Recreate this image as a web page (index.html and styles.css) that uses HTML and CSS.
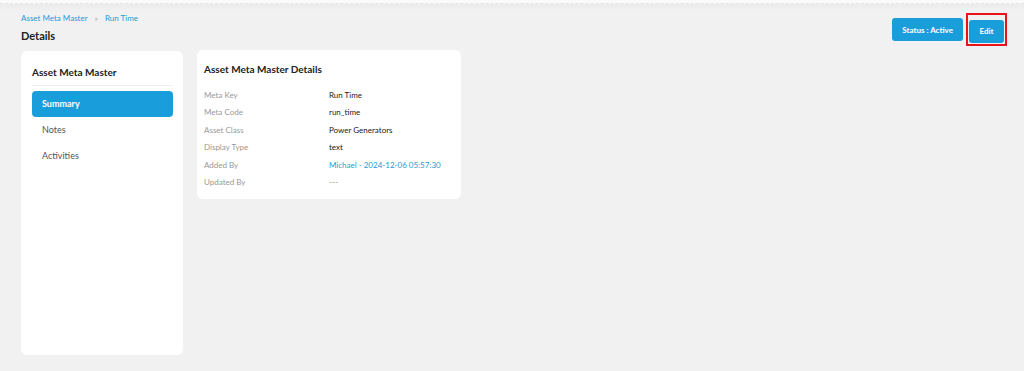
FILE: index.html
```html
<!DOCTYPE html>
<html lang="en">
<head>
    <meta charset="UTF-8">
    <meta name="viewport" content="width=device-width, initial-scale=1.0">
    <title>Asset Meta Master - Details</title>
    <link rel="stylesheet" href="styles.css">
</head>
<body>

    <div class="topbar"></div>

    <div class="page">
        <div class="page-head">
            <div>
                <div class="breadcrumb">
                    <a href="#">Asset Meta Master</a>
                    <span class="sep">&raquo;</span>
                    <a href="#">Run Time</a>
                </div>
                <h1>Details</h1>
            </div>
            <div class="actions">
                <button class="btn">Status : Active</button>
                <span class="highlight"><button class="btn btn-edit">Edit</button></span>
            </div>
        </div>

        <div class="content">
            <div class="side-card">
                <h2>Asset Meta Master</h2>
                <ul class="side-nav">
                    <li class="active">Summary</li>
                    <li>Notes</li>
                    <li>Activities</li>
                </ul>
            </div>

            <div class="detail-card">
                <h2>Asset Meta Master Details</h2>
                <div class="rows">
                    <div class="row"><span class="label">Meta Key</span><span class="value">Run Time</span></div>
                    <div class="row"><span class="label">Meta Code</span><span class="value">run_time</span></div>
                    <div class="row"><span class="label">Asset Class</span><span class="value">Power Generators</span></div>
                    <div class="row"><span class="label">Display Type</span><span class="value">text</span></div>
                    <div class="row"><span class="label">Added By</span><span class="value link">Michael - 2024-12-06 05:57:30</span></div>
                    <div class="row"><span class="label">Updated By</span><span class="value muted">---</span></div>
                </div>
            </div>
        </div>
    </div>

</body>
</html>
```

FILE: styles.css
```css
body {
    font-family: Lato, "Noto Sans", sans-serif;
    margin: 0;
    background-color: #f1f1f1;
    color: #222;
    height: 371px;
    overflow: hidden;
}

/* franja superior del header */
.topbar {
    height: 3px;
    background-color: #fafafa;
    border-bottom: 1px dashed #e4e4e4;
    box-shadow: 0 2px 6px rgba(0, 0, 0, 0.05);
}

.page {
    padding: 0 17px 0 21px;
}

.page-head {
    display: flex;
    justify-content: space-between;
    align-items: flex-start;
}

.breadcrumb {
    margin-top: 9px;
    font-size: 8px;
    line-height: 11px;
}

.breadcrumb a {
    color: #1b9bd7;
    text-decoration: none;
}

.breadcrumb .sep {
    color: #aaa;
    margin: 0 5px;
}

h1 {
    margin: 5px 0 0;
    font-size: 11px;
    line-height: 14px;
    font-weight: bold;
}

.actions {
    display: flex;
    align-items: flex-start;
    gap: 3px;
    margin-top: 9px;
}

.btn {
    font-family: inherit;
    background-color: #1a9ddb;
    color: #fff;
    border: none;
    border-radius: 3px;
    height: 23px;
    padding: 0 10px;
    font-size: 8px;
    font-weight: bold;
    margin-top: 5px;
    cursor: pointer;
}

.btn-edit {
    width: 35px;
    padding: 0;
    margin-top: 0;
}

.highlight {
    display: block;
    border: 2px solid #e8141b;
    padding: 3px 1px 1px;
}

.content {
    display: flex;
    align-items: flex-start;
    gap: 14px;
    margin-top: 4px;
}

.side-card {
    background-color: #fff;
    border-radius: 6px;
    width: 162px;
    height: 304px;
    box-sizing: border-box;
    padding: 0 10px 0 11px;
    margin-top: 1px;
}

.side-card h2 {
    margin: 0;
    padding: 15px 0 6px;
    font-size: 10px;
    line-height: 13px;
    font-weight: bold;
    color: #222;
    border-bottom: 1px solid #eee;
}

.side-nav {
    list-style: none;
    margin: 5px 0 0;
    padding: 0;
}

.side-nav li {
    height: 26px;
    line-height: 26px;
    padding-left: 10px;
    font-size: 9px;
    color: #555;
    border-radius: 4px;
}

.side-nav li.active {
    background-color: #1a9ddb;
    color: #fff;
    font-weight: bold;
}

.detail-card {
    background-color: #fff;
    border-radius: 6px;
    width: 264px;
    box-sizing: border-box;
    padding: 13px 7px 7px;
}

.detail-card h2 {
    margin: 0 0 11px;
    font-size: 10px;
    line-height: 13px;
    font-weight: bold;
    color: #222;
}

.row {
    display: flex;
    height: 17.6px;
    line-height: 17.6px;
    font-size: 8px;
}

.label {
    width: 125px;
    color: #999;
}

.value {
    color: #222;
}

.value.link {
    color: #1b9bd7;
}

.value.muted {
    color: #888;
}
```
